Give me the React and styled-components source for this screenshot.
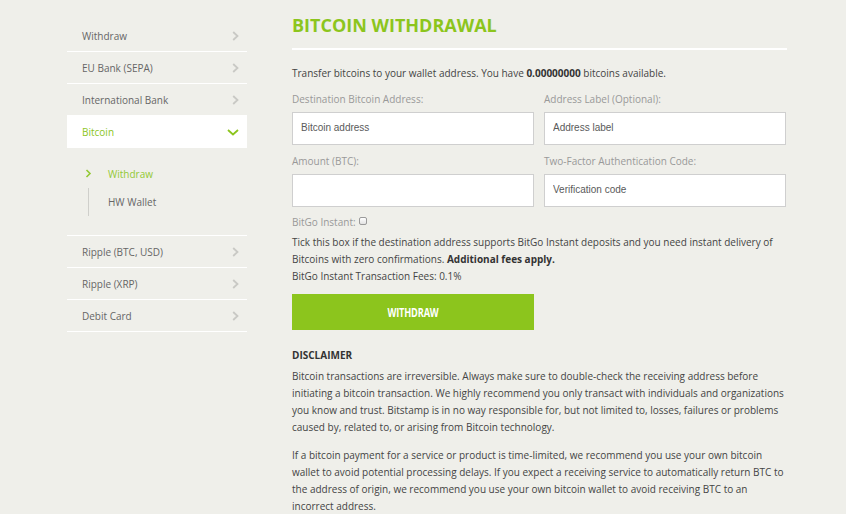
import React from "react";
import styled, { createGlobalStyle } from "styled-components";

const GREEN = "#8cc51d";

const Global = createGlobalStyle`
  html, body { margin: 0; padding: 0; background: #efefea; }
  body { font-family: "Open Sans", "Liberation Sans", sans-serif; color: #444; }
  * { box-sizing: border-box; }
`;

const Page = styled.div`
  display: flex;
  align-items: flex-start;
  gap: 45px;
  padding-left: 67px;
  min-height: 514px;
`;

const Sidebar = styled.nav`
  width: 180px;
  margin-top: 20px;
  display: flex;
  flex-direction: column;
`;

const NavRow = styled.div`
  height: 32px;
  display: flex;
  align-items: center;
  justify-content: space-between;
  padding: ${(p) => (p.$open ? "0" : "1px")} 8px 0 15px;
  font-size: 10px;
  color: ${(p) => (p.$open ? GREEN : "#666")};
  background: ${(p) => (p.$open ? "#fff" : "transparent")};
  border-bottom: ${(p) => (p.$open ? "0" : "1px solid #fff")};
`;

const SubMenu = styled.div`
  padding: 12px 0 19px;
  border-bottom: 1px solid #fff;
`;

const SubItem = styled.div`
  position: relative;
  height: 28px;
  margin-left: 21px;
  padding-left: 19px;
  display: flex;
  align-items: center;
  font-size: 10px;
  color: ${(p) => (p.$active ? "#93c934" : "#666")};
  border-left: 1px solid ${(p) => (p.$active ? "transparent" : "#cfcfcb")};
`;

const SubMarker = styled.svg`
  position: absolute;
  left: -4px;
  top: 9px;
`;

const Main = styled.main`
  width: 495px;
  padding-top: 12px;
`;

const Title = styled.h1`
  margin: 0;
  font-size: 18px;
  line-height: 26px;
  font-weight: 700;
  color: ${GREEN};
  padding-bottom: 10px;
  border-bottom: 2px solid #fff;
`;

const Text = styled.p`
  margin: ${(p) => p.$m || "0"};
  font-size: 10px;
  line-height: 17px;
  color: #444;
  b { font-weight: 700; color: #333; }
`;

const Heading = styled.h3`
  margin: 17px 0 4px;
  font-size: 10px;
  line-height: 17px;
  font-weight: 700;
  color: #333;
`;

const FieldGrid = styled.div`
  margin-top: 9px;
  display: grid;
  grid-template-columns: 242px 242px;
  column-gap: 10px;
  row-gap: 8px;
`;

const Field = styled.label`
  display: flex;
  flex-direction: column;
  gap: 5px;
`;

const Label = styled.span`
  font-size: 10px;
  line-height: 16px;
  color: #999;
`;

const Input = styled.input`
  height: 33px;
  width: 100%;
  border: 1px solid #cfcfcf;
  background: #fff;
  padding: 0 8px 2px;
  font-family: "Liberation Sans", Arial, sans-serif;
  font-size: 10px;
  color: #333;
  outline: none;
  &::placeholder { color: #5a5a5a; opacity: 1; }
`;

const Instant = styled.div`
  margin-top: 7px;
  font-size: 10px;
  line-height: 17px;
  color: #999;
  display: flex;
  align-items: center;
  gap: 3px;
`;

const CheckBox = styled.span`
  display: inline-block;
  width: 8px;
  height: 8px;
  margin-top: -4px;
  border: 1px solid #9a9a9a;
  border-radius: 2px;
  background: linear-gradient(#fff, #e2e2e2);
`;

const Button = styled.button`
  display: flex;
  align-items: center;
  justify-content: center;
  margin-top: 9px;
  width: 242px;
  height: 36px;
  border: 0;
  padding: 0;
  background: ${GREEN};
  cursor: pointer;
`;

const ButtonLabel = styled.span`
  display: inline-block;
  font-family: "Open Sans", sans-serif;
  font-size: 11.5px;
  font-weight: 700;
  color: #fff;
  letter-spacing: -0.2px;
  transform: scaleX(0.8);
`;

const Chevron = ({ down }) =>
  down ? (
    <svg width="12" height="7" viewBox="0 0 12 7">
      <path d="M1 1 L6 5.5 L11 1" fill="none" stroke={GREEN} strokeWidth="1.8" />
    </svg>
  ) : (
    <svg width="7" height="10" viewBox="0 0 7 10">
      <path d="M1.2 1 L5.5 5 L1.2 9" fill="none" stroke="#c9c9c5" strokeWidth="1.8" />
    </svg>
  );

const Row = ({ label, open }) => (
  <NavRow $open={open}>
    <span>{label}</span>
    <Chevron down={open} />
  </NavRow>
);

export default function App() {
  return (
    <>
      <Global />
      <Page>
        <Sidebar>
          <Row label="Withdraw" />
          <Row label="EU Bank (SEPA)" />
          <Row label="International Bank" />
          <Row label="Bitcoin" open />
          <SubMenu>
            <SubItem $active>
              <SubMarker width="7" height="9" viewBox="0 0 7 9">
                <path d="M1.5 1 L5 4.5 L1.5 8" fill="none" stroke="#93c934" strokeWidth="1.6" />
              </SubMarker>
              Withdraw
            </SubItem>
            <SubItem>HW Wallet</SubItem>
          </SubMenu>
          <Row label="Ripple (BTC, USD)" />
          <Row label="Ripple (XRP)" />
          <Row label="Debit Card" />
        </Sidebar>
        <Main>
          <Title>BITCOIN WITHDRAWAL</Title>
          <Text $m="15px 0 0">
            Transfer bitcoins to your wallet address. You have <b>0.00000000</b> bitcoins available.
          </Text>
          <FieldGrid>
            <Field>
              <Label>Destination Bitcoin Address:</Label>
              <Input placeholder="Bitcoin address" />
            </Field>
            <Field>
              <Label>Address Label (Optional):</Label>
              <Input placeholder="Address label" />
            </Field>
            <Field>
              <Label>Amount (BTC):</Label>
              <Input />
            </Field>
            <Field>
              <Label>Two-Factor Authentication Code:</Label>
              <Input placeholder="Verification code" />
            </Field>
          </FieldGrid>
          <Instant>
            BitGo Instant: <CheckBox />
          </Instant>
          <Text $m="3px 0 0">
            Tick this box if the destination address supports BitGo Instant deposits and you need instant delivery of
            Bitcoins with zero confirmations. <b>Additional fees apply.</b>
          </Text>
          <Text>BitGo Instant Transaction Fees: 0.1%</Text>
          <Button>
            <ButtonLabel>WITHDRAW</ButtonLabel>
          </Button>
          <Heading>DISCLAIMER</Heading>
          <Text>
            Bitcoin transactions are irreversible. Always make sure to double-check the receiving address before
            initiating a bitcoin transaction. We highly recommend you only transact with individuals and organizations
            you know and trust. Bitstamp is in no way responsible for, but not limited to, losses, failures or problems
            caused by, related to, or arising from Bitcoin technology.
          </Text>
          <Text $m="11px 0 0">
            If a bitcoin payment for a service or product is time-limited, we recommend you use your own bitcoin wallet
            to avoid potential processing delays. If you expect a receiving service to automatically return BTC to the
            address of origin, we recommend you use your own bitcoin wallet to avoid receiving BTC to an incorrect
            address.
          </Text>
        </Main>
      </Page>
    </>
  );
}
